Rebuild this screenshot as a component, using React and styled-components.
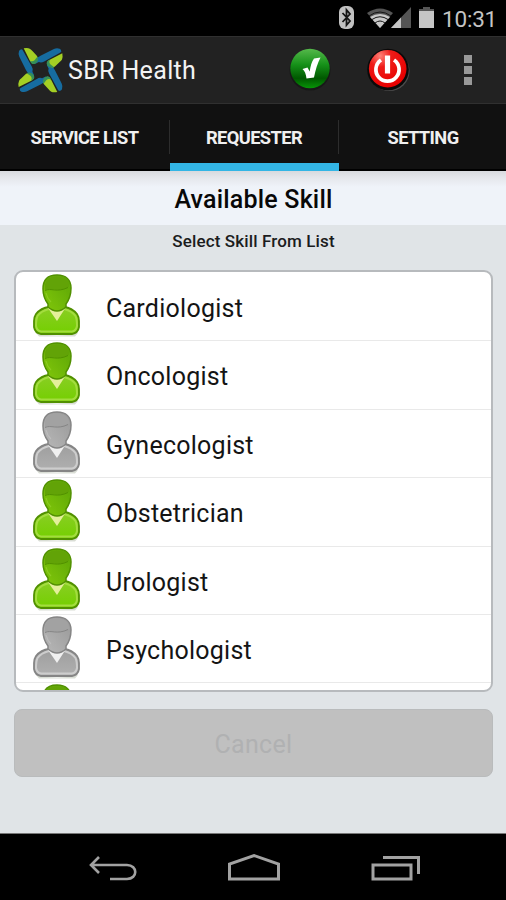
import React, { useState } from "react";
import styled, { createGlobalStyle } from "styled-components";

const GlobalStyle = createGlobalStyle`
  * {
    box-sizing: border-box;
  }
  body {
    margin: 0;
    background: #e0e4e7;
    font-family: Roboto, "Liberation Sans", sans-serif;
  }
`;

// Styled Components
const Screen = styled.div`
  width: 506px;
  height: 900px;
  display: flex;
  flex-direction: column;
  overflow: hidden;
  background: #e0e4e7;
`;

const StatusBar = styled.div`
  height: 36px;
  flex-shrink: 0;
  display: flex;
  align-items: center;
  justify-content: flex-end;
  padding-right: 9px;
  background: #000;
  color: #c4c4c4;
`;

const StatusIcons = styled.svg`
  width: 102px;
  height: 36px;
`;

const Clock = styled.span`
  width: 55px;
  margin-left: 2px;
  padding-top: 2px;
  font-size: 22.5px;
  line-height: 36px;
  letter-spacing: -0.2px;
  white-space: nowrap;
`;

const ActionBar = styled.header`
  height: 68px;
  flex-shrink: 0;
  display: flex;
  align-items: center;
  padding: 0 30px 0 18px;
  background: #222;
  border-top: 1px solid #303030;
  border-bottom: 1px solid #303030;
`;

const LogoSvg = styled.svg`
  width: 45px;
  height: 45px;
`;

const AppName = styled.h1`
  flex: 1;
  margin: 2px 0 0 5px;
  color: #f3f3f3;
  font-size: 25px;
  font-weight: 400;
  line-height: 34px;
  letter-spacing: 0.35px;
`;

const IconButton = styled.button`
  width: 44px;
  height: 44px;
  padding: 0;
  margin-right: ${(props) => props.$gap}px;
  border: none;
  background: none;
  cursor: pointer;

  svg {
    display: block;
  }
`;

const MenuButton = styled.button`
  width: 15px;
  padding: 0 3px;
  border: none;
  background: none;
  display: flex;
  flex-direction: column;
  gap: 3px;
`;

const Dot = styled.span`
  width: 8px;
  height: 8px;
  background: #999;
`;

const TabBar = styled.nav`
  height: 67px;
  flex-shrink: 0;
  display: grid;
  grid-template-columns: 170px 169px 167px;
  background: #111;
  border-bottom: 2px solid #000;
`;

const Tab = styled.button`
  height: 67px;
  padding: 0;
  display: flex;
  flex-direction: column;
  border: none;
  background: none;
  color: #f0f0f0;
  font-family: inherit;
  font-size: 18.3px;
  font-weight: 700;
  letter-spacing: -0.6px;
  border-bottom: 8px solid ${(props) => (props.$active ? "#33b5e5" : "transparent")};
`;

const TabLabel = styled.span`
  width: 100%;
  height: 34px;
  margin-top: 16px;
  padding: 1px 0 0 ${(props) => (props.$divider ? 0 : 2)}px;
  line-height: 34px;
  text-align: center;
  border-right: 1px solid ${(props) => (props.$divider ? "#2d2d2d" : "transparent")};
`;

const PageTitle = styled.h2`
  height: 54px;
  flex-shrink: 0;
  margin: 0;
  padding: 1px 0 0 1px;
  background: linear-gradient(#d8dade 0, #e5e7ec 7px, #eff3f9 16px);
  color: #080808;
  font-size: 25px;
  font-weight: 500;
  line-height: 55px;
  letter-spacing: 0.2px;
  text-align: center;
`;

const Content = styled.main`
  flex: 1;
  padding: 0 13px 0 14px;
`;

const Hint = styled.p`
  height: 45px;
  margin: 0;
  color: #1b1c1d;
  font-size: 17px;
  font-weight: 500;
  line-height: 33px;
  letter-spacing: 0.13px;
  text-align: center;
`;

const SkillList = styled.ul`
  height: 422px;
  margin: 0;
  padding: 1px 0 0;
  list-style: none;
  overflow: hidden;
  background: #fff;
  border: 2px solid #b7babd;
  border-radius: 9px;
`;

const SkillRow = styled.li`
  height: 68.4px;
  display: flex;
  align-items: flex-start;
  padding: 0 0 0 16px;
  border-bottom: 1px solid #e9e9e9;
`;

const SkillName = styled.span`
  margin-left: 24px;
  color: #141414;
  font-size: 25px;
  line-height: 72px;
  letter-spacing: 0.25px;
`;

const CancelButton = styled.button`
  width: 100%;
  height: 68px;
  margin-top: 17px;
  padding: 2px 0 0;
  border: 1px solid #b9bbbc;
  border-radius: 8px;
  background: #c0c0c0;
  color: #b0b1b2;
  font-family: inherit;
  font-size: 25px;
  letter-spacing: 0.3px;
`;

const NavBar = styled.footer`
  height: 67px;
  flex-shrink: 0;
  display: flex;
  justify-content: space-between;
  align-items: center;
  padding: 3px 84px 0 86px;
  background: #000;
  border-top: 1px solid #777;
`;

const NavIcon = styled.svg`
  width: 52px;
  height: 32px;
  fill: none;
  stroke: #a2a2a2;
  stroke-width: 3;
`;

const tabs = ["SERVICE LIST", "REQUESTER", "SETTING"];

const skills = [
  { name: "Cardiologist", online: true },
  { name: "Oncologist", online: true },
  { name: "Gynecologist", online: false },
  { name: "Obstetrician", online: true },
  { name: "Urologist", online: true },
  { name: "Psychologist", online: false },
  { name: "", online: true },
];

const green = {
  edge: "#519000",
  hair: "#62a307",
  light: "#82c80a",
  dark: "#5ba406",
  shoulder: "#8ace25",
  body: "#74cf00",
  rim: "#a3dc3f",
  collar: "#e4ef9b",
};

const gray = {
  edge: "#858585",
  hair: "#a2a2a2",
  light: "#b8b8b8",
  dark: "#989898",
  shoulder: "#9e9e9e",
  body: "#b0b0b0",
  rim: "#cdcdcd",
  collar: "#f0f0f0",
};

const Logo = () => (
  <LogoSvg viewBox="-67 -66 134 134">
    {[0, 90, 180, 270].map((deg) => (
      <path
        key={deg}
        transform={`rotate(${deg})`}
        d="M-25-27 L0-43 L40-63 Q48-67 57-64 Q62-62 62-55 L58-52 L11-26 Q3-21-5-24 L-15-19Z"
        fill="#166ca0"
      />
    ))}
    {[0, 90, 180, 270].map((deg) => (
      <g key={deg} transform={`rotate(${deg})`}>
        <path d="M65-50 Q67-38 64-32 Q62-28 57-24 L43-11 Q31-3 20-18 Q17-26 29-32Z" fill="#a4cf24" />
        <path d="M29-32 Q23-25 30-17 L41-9 Q29-3 20-15 Q14-26 29-32Z" fill="#368f58" />
      </g>
    ))}
  </LogoSvg>
);

const CheckIcon = () => (
  <svg width="44" height="44" viewBox="0 0 44 44">
    <defs>
      <linearGradient id="check" x2="0" y2="1">
        <stop offset="0" stopColor="#55b94b" />
        <stop offset=".4" stopColor="#169119" />
        <stop offset=".75" stopColor="#005800" />
        <stop offset="1" stopColor="#079507" />
      </linearGradient>
    </defs>
    <circle cx="22" cy="22" r="20.5" fill="#181818" />
    <circle cx="22" cy="20.5" r="19.7" fill="url(#check)" />
    <path d="M26 10.5 L32.5 9.5 C29.5 15 27.5 22 26 29.5 L18.5 30.5 C18 26 16.8 23 14.5 21 L19.5 19.5 L21.7 23.5 C22.5 18 23.5 14 26 10.5Z" fill="#fff" />
  </svg>
);

const PowerIcon = () => (
  <svg width="44" height="44" viewBox="0 0 44 44">
    <defs>
      <radialGradient id="power" cx=".3" cy=".16" r=".85">
        <stop offset="0" stopColor="#ff8278" />
        <stop offset=".35" stopColor="#ef1b18" />
        <stop offset="1" stopColor="#e70000" />
      </radialGradient>
    </defs>
    <circle cx="23.5" cy="23" r="20" fill="#4c4c4c" />
    <circle cx="22" cy="21.5" r="20.8" fill="#0b0909" />
    <circle cx="21.7" cy="20.7" r="18.8" fill="url(#power)" />
    <path d="M15 12 A11.6 11.6 0 1 0 28 12" fill="none" stroke="#fff" strokeWidth="3.7" />
    <path d="M21.5 7.5 V25.5" stroke="#fff" strokeWidth="5.2" />
  </svg>
);

const Person = ({ online }) => {
  const c = online ? green : gray;
  const id = online ? "on" : "off";
  return (
    <svg width="50" height="65" viewBox="0 0 50 65">
      <defs>
        <linearGradient id={`face-${id}`} x1="0" y1="1" x2="1" y2="0">
          <stop offset="0" stopColor={c.light} />
          <stop offset="1" stopColor={c.dark} />
        </linearGradient>
        <linearGradient id={`body-${id}`} x2="0" y2="1">
          <stop offset="0" stopColor={c.shoulder} />
          <stop offset="1" stopColor={c.body} />
        </linearGradient>
      </defs>
      <path d="M4 60 Q25 65 46 60 L43 63.5 H7Z" fill="#d9ddd5" />
      <path
        d="M17 34 Q9 35 4 41 Q2 44 2 48 V54 Q3 60 9 61 H40 Q46 60 47 54 V48 Q47 44 45 41 Q40 35 32 34Z"
        fill={`url(#body-${id})`}
        stroke={c.edge}
        strokeWidth="1.8"
      />
      <path
        d="M17 36 Q9 38 5.5 43 Q4 46 4 53 Q5 58 9 58.5 H40 Q44 58 45 53 Q45 46 43.5 43 Q40 38 32 36"
        fill="none"
        stroke={c.rim}
        strokeWidth="2"
      />
      <path d="M16 35 L34 34 L25 48Z" fill={c.collar} />
      <path
        d="M25 2 C15 2 11 8 11 16 C11 23 13 27 16 31 L16 34 Q25 42 34 34 L34 31 C37 27 39 22 39 15 C39 7 34 2 25 2Z"
        fill={`url(#face-${id})`}
        stroke={c.edge}
        strokeWidth="1.5"
      />
      <path d="M13 17 C19 14 25 20 36 14 C38 15 37 9 35 7 C30 2 18 2 14 8 Q12 12 13 17Z" fill={c.hair} />
      <path d="M13 17.5 C19 14.5 25 20 36 14.5" fill="none" stroke={c.edge} strokeWidth="1" />
      <path d="M14 20 Q15 25 19 29" fill="none" stroke={c.rim} strokeWidth="1.2" opacity=".45" />
    </svg>
  );
};

const App = () => {
  const [activeTab, setActiveTab] = useState("REQUESTER");

  return (
    <Screen>
      <GlobalStyle />
      <StatusBar>
        <StatusIcons viewBox="0 0 102 36">
          <rect x="1" y="6" width="15" height="23" rx="6" fill="#c1c1c1" />
          <path d="M4.5 13 L12 21 L8.5 25 V10 L12 14 L4.5 22" fill="none" stroke="#151515" strokeWidth="1.8" />
          <path d="M29 13 Q42 4 55 13 L42 28Z" fill="#555" />
          <path d="M32 17 Q42 11 52 17 L42 28Z" fill="#c8c8c8" />
          <g fill="none" stroke="#151515" strokeWidth="1">
            <path d="M31 16 Q42 8 53 16" />
            <path d="M34 19.5 Q42 14 50 19.5" />
            <path d="M37 23 Q42 19 47 23" />
          </g>
          <path d="M53 28 L73 7 V28Z" fill="#555" />
          <path d="M53 28 L63 17.5 V28Z" fill="#c4c4c4" />
          <path d="M81 9 H85 V7 H92 V9 H96 V28 H81Z" fill="#555" />
          <path d="M81 11 H96 V28 H81Z" fill="#c5c5c5" />
        </StatusIcons>
        <Clock>10:31</Clock>
      </StatusBar>

      <ActionBar>
        <Logo />
        <AppName>SBR Health</AppName>
        <IconButton $gap={34} aria-label="Available">
          <CheckIcon />
        </IconButton>
        <IconButton $gap={51} aria-label="Log out">
          <PowerIcon />
        </IconButton>
        <MenuButton aria-label="Menu">
          <Dot />
          <Dot />
          <Dot />
        </MenuButton>
      </ActionBar>

      <TabBar>
        {tabs.map((tab, i) => (
          <Tab key={tab} $active={tab === activeTab} onClick={() => setActiveTab(tab)}>
            <TabLabel $divider={i < tabs.length - 1}>{tab}</TabLabel>
          </Tab>
        ))}
      </TabBar>

      <PageTitle>Available Skill</PageTitle>
      <Content>
        <Hint>Select Skill From List</Hint>
        <SkillList>
          {skills.map((skill, i) => (
            <SkillRow key={i}>
              <Person online={skill.online} />
              <SkillName>{skill.name}</SkillName>
            </SkillRow>
          ))}
        </SkillList>
        <CancelButton disabled>Cancel</CancelButton>
      </Content>

      <NavBar>
        <NavIcon viewBox="0 0 52 32">
          <path d="M13 4 L5 12 L13 20 M5 12 H41 C52 12 52 26 41 26 H24" strokeWidth="2.6" />
        </NavIcon>
        <NavIcon viewBox="0 0 52 32">
          <path d="M1.5 26 V11 L26 2.5 L50.5 11 V26Z" />
        </NavIcon>
        <NavIcon viewBox="0 0 52 32">
          <path d="M3 12 H41 V26 H3Z M13 4.5 H48.5 V21" />
        </NavIcon>
      </NavBar>
    </Screen>
  );
};

export default App;
